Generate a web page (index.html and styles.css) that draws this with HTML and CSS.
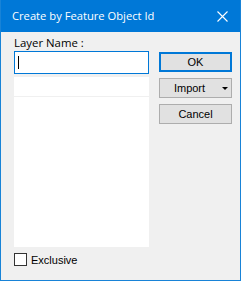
FILE: index.html
```html
<!DOCTYPE html>
<html lang="en">
<head>
    <meta charset="UTF-8">
    <title>Create by Feature Object Id</title>
    <link rel="stylesheet" href="styles.css">
</head>
<body>
    <div class="window">
        <div class="titlebar">
            <span class="title">Create by Feature Object Id</span>
            <svg class="close" width="11" height="11" viewBox="0 0 11 11">
                <path d="M0.5 0.5 L10.5 10.5 M10.5 0.5 L0.5 10.5" stroke="#fff" stroke-width="1.1" fill="none"/>
            </svg>
        </div>

        <div class="content">
            <div class="left">
                <label class="field-label" for="layer-name">Layer Name :</label>
                <div class="text-input"><span class="caret"></span></div>
                <div class="list">
                    <div class="list-head"></div>
                </div>
                <label class="check">
                    <span class="box"></span>
                    <span>Exclusive</span>
                </label>
            </div>

            <div class="buttons">
                <button class="btn btn-default">OK</button>
                <button class="btn btn-menu">Import <span class="arrow"></span></button>
                <button class="btn">Cancel</button>
            </div>
        </div>
    </div>
</body>
</html>
```

FILE: styles.css
```css
/* Window frame */
body {
    margin: 0;
    background-color: #f0f0f0;
}

.window {
    width: 241px;
    height: 281px;
    box-sizing: border-box;
    border: 1px solid #1883d7;
    border-top: none;
    background-color: #f0f0f0;
    display: flex;
    flex-direction: column;
}

/* Title bar */
.titlebar {
    height: 32px;
    background-color: #0078d7;
    color: #fff;
    display: flex;
    align-items: center;
    justify-content: space-between;
    padding: 0 11px 0 11px;
    box-sizing: border-box;
    flex-shrink: 0;
}

.title {
    font-family: "Open Sans", sans-serif;
    font-size: 11.2px;
    margin-top: -1px;
}

.close {
    margin-right: 1px;
    margin-top: 1px;
}

/* Dialog body */
.content {
    display: flex;
    gap: 10px;
    padding: 3px 0 0 13px;
}

.left {
    width: 135px;
    display: flex;
    flex-direction: column;
}

.field-label {
    font-family: "Open Sans", sans-serif;
    font-size: 11.4px;
    line-height: 16px;
    color: #000;
}

.text-input {
    height: 23px;
    box-sizing: border-box;
    border: 1px solid #0078d7;
    background-color: #fff;
    padding: 4px 0 0 3px;
}

.caret {
    display: block;
    width: 1px;
    height: 13px;
    background-color: #000;
}

.list {
    margin-top: 3px;
    height: 170px;
    background-color: #fff;
}

.list-head {
    height: 19px;
    border-bottom: 1px solid #f0f0f0;
}

/* Checkbox */
.check {
    display: flex;
    align-items: center;
    gap: 4px;
    margin-top: 6px;
    font-family: "Liberation Sans", Arial, sans-serif;
    font-size: 11px;
    color: #000;
}

.box {
    width: 11px;
    height: 11px;
    border: 1px solid #333;
    background-color: #fff;
}

/* Buttons */
.buttons {
    display: flex;
    flex-direction: column;
    gap: 6px;
    padding-top: 17px;
}

.btn {
    width: 73px;
    height: 20px;
    box-sizing: border-box;
    border: 1px solid #adadad;
    background-color: #e1e1e1;
    font-family: "Liberation Sans", Arial, sans-serif;
    font-size: 11px;
    color: #000;
    padding: 0;
    margin: 0;
    position: relative;
}

.btn-default {
    border: 2px solid #0078d7;
}

.btn-menu {
    padding-right: 12px;
}

.arrow {
    position: absolute;
    right: 3px;
    top: 8px;
    width: 0;
    height: 0;
    border-left: 3px solid transparent;
    border-right: 3px solid transparent;
    border-top: 3px solid #000;
}
```
